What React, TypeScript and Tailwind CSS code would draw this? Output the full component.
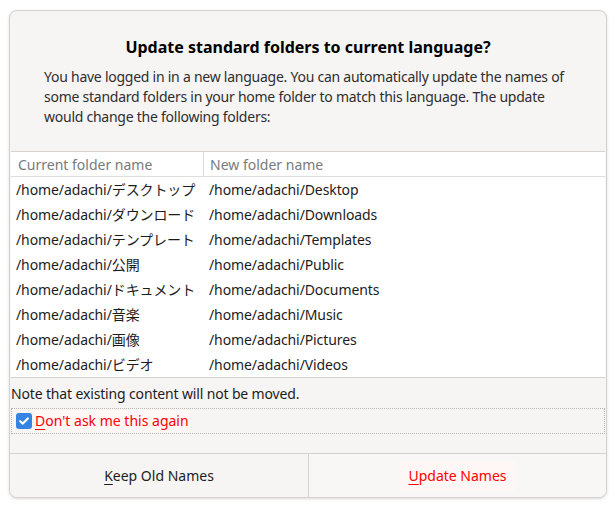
import React from 'react';

const rows: [string, string][] = [
  ['/home/adachi/デスクトップ', '/home/adachi/Desktop'],
  ['/home/adachi/ダウンロード', '/home/adachi/Downloads'],
  ['/home/adachi/テンプレート', '/home/adachi/Templates'],
  ['/home/adachi/公開', '/home/adachi/Public'],
  ['/home/adachi/ドキュメント', '/home/adachi/Documents'],
  ['/home/adachi/音楽', '/home/adachi/Music'],
  ['/home/adachi/画像', '/home/adachi/Pictures'],
  ['/home/adachi/ビデオ', '/home/adachi/Videos'],
];

const font = { fontFamily: '"Noto Sans", "Noto Sans CJK JP", sans-serif' };

const App: React.FC = () => {
  return (
    <div className="w-[615px] h-[507px] bg-white pt-[10px] pl-[9px]" style={font}>
      <div className="w-[598px] h-[488px] flex flex-col rounded-[8px] border border-[#d6d1cd] bg-[#f6f5f4] shadow-[0_1px_3px_rgba(0,0,0,0.15)] overflow-hidden text-[#1c1c1c]">
        <div className="pt-[26px] px-[34px]">
          <h1 className="text-center text-[16px] font-bold leading-[20px] text-black">
            Update standard folders to current language?
          </h1>
          <p className="mt-[10px] text-[14px] leading-[20px] tracking-[-0.25px] text-[#2e2e2e]">
            You have logged in in a new language. You can automatically update the names of some standard folders in your home folder to match this language. The update would change the following folders:
          </p>
        </div>

        <div className="mt-[24px] mx-[1px] border-t border-b border-[#d6d1cd] bg-white">
          <div className="flex h-[25px] border-b border-[#e0ddda] text-[14px] text-[#7a7a7a]">
            <div className="w-[193px] flex items-center pl-[7px] border-r border-[#dcd8d4]">Current folder name</div>
            <div className="flex-1 flex items-center pl-[6px]">New folder name</div>
          </div>
          {rows.map(([from, to]) => (
            <div key={from} className="flex h-[25px] text-[14px] tracking-[-0.1px] text-[#1c1c1c]">
              <div className="w-[193px] flex items-center pl-[5px] whitespace-nowrap">{from}</div>
              <div className="flex-1 flex items-center pl-[5px]">{to}</div>
            </div>
          ))}
        </div>

        <div className="px-[1px] pt-[6px] text-[14px] leading-[20px] tracking-[-0.15px] text-[#1c1c1c]">
          Note that existing content will not be moved.
        </div>

        <div className="mt-[4px] mx-[1px] h-[26px] flex items-center border border-dotted border-[#b8b4b0] pl-[4px]">
          <span className="w-[16px] h-[16px] rounded-[3px] bg-[#3584e4] flex items-center justify-center">
            <svg width="12" height="12" viewBox="0 0 12 12">
              <path d="M2.2 6.2 L4.8 8.6 L9.8 3.4" fill="none" stroke="white" strokeWidth="2.2" strokeLinecap="round" strokeLinejoin="round" />
            </svg>
          </span>
          <span className="ml-[3px] pr-[1px] text-[14px] leading-[22px] text-[#ff0000] bg-[#fff6f6]">
            <span className="underline underline-offset-[3px]">D</span>on't ask me this again
          </span>
        </div>

        <div className="mt-auto h-[44px] flex border-t border-[#d6d1cd] text-[14px]">
          <button className="w-[299px] flex items-center justify-center border-r border-[#d6d1cd] bg-[#f6f5f4] text-[#1c1c1c]">
            <span><span className="underline underline-offset-[3px]">K</span>eep Old Names</span>
          </button>
          <button className="flex-1 flex items-center justify-center bg-[#f8f7f6]">
            <span className="px-[8px] py-[4px] bg-[#fff6f6] text-[#ff0000]">
              <span className="underline underline-offset-[3px]">U</span>pdate Names
            </span>
          </button>
        </div>
      </div>
    </div>
  );
};

export default App;
